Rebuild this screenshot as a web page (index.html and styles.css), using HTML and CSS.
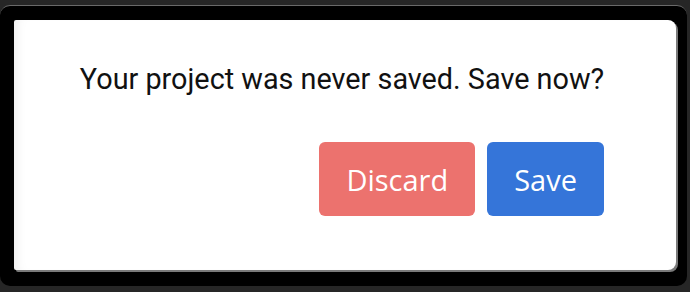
FILE: index.html
```html
<!DOCTYPE html>
<html lang="en">
<head>
  <meta charset="UTF-8">
  <meta name="viewport" content="width=device-width, initial-scale=1.0">
  <title>Unsaved Project</title>
  <link rel="stylesheet" href="styles.css">
</head>
<body>
  <div class="frame">
    <div class="dialog">
      <p class="message">Your project was never saved. Save now?</p>
      <div class="actions">
        <button class="btn btn-discard">Discard</button>
        <button class="btn btn-save">Save</button>
      </div>
    </div>
  </div>
</body>
</html>
```

FILE: styles.css
```css
body {
  margin: 0;
  background: #262626;
  height: 292px;
  overflow: hidden;
}
.frame {
  box-sizing: border-box;
  width: 687px;
  height: 281px;
  margin-top: 5px;
  background: #000;
  border-top: 1px solid #6a6a6a;
  border-radius: 10px;
  padding: 14px 11px 16px 14px;
}
.dialog {
  box-sizing: border-box;
  height: 250px;
  background: #fff;
  border-radius: 2px 8px 8px 2px;
  box-shadow: 2px 2px 0 #7a7a7a, inset 10px 0 12px -8px rgba(0, 0, 0, 0.08);
  padding: 42px 40px 0 34px;
}
.message {
  margin: 0;
  font-family: Roboto, "Liberation Sans", sans-serif;
  font-size: 28.8px;
  line-height: 34px;
  color: #111;
  text-align: center;
  white-space: nowrap;
}
.actions {
  display: flex;
  justify-content: flex-end;
  gap: 12px;
  margin-top: 46px;
  padding-right: 32px;
}
.btn {
  height: 74px;
  padding: 0 27px;
  border: none;
  border-radius: 6px;
  font-family: "Open Sans", "Noto Sans", sans-serif;
  font-size: 29px;
  color: #fff;
  cursor: pointer;
}
.btn-discard {
  background: #ec726e;
}
.btn-save {
  background: #3575d9;
}
```
